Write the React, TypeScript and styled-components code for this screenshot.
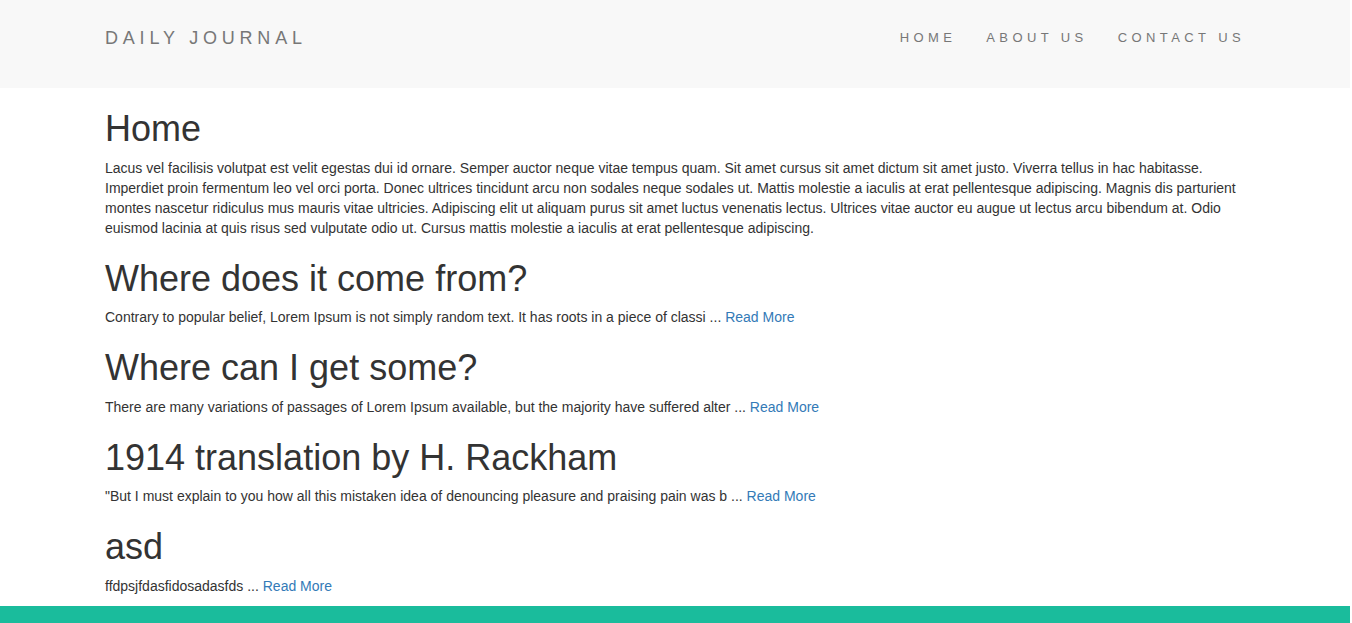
import React from "react";
import styled, { createGlobalStyle } from "styled-components";

const Global = createGlobalStyle`
  html, body { margin: 0; padding: 0; background: #fff; }
  body {
    font-family: "Liberation Sans", Arial, Helvetica, sans-serif;
    font-size: 14px;
    line-height: 1.42857;
    color: #333;
  }
  * { box-sizing: border-box; }
`;

const Page = styled.div`
  padding-right: 2px;
`;

const Navbar = styled.nav`
  background: #f8f8f8;
  height: 88px;
`;

const Container = styled.div`
  width: 1170px;
  margin: 0 auto;
  padding: 0 15px;
`;

const NavInner = styled(Container)`
  display: flex;
  align-items: center;
  justify-content: space-between;
  height: 100%;
  padding-bottom: 13px;
`;

const Brand = styled.a`
  font-size: 18px;
  letter-spacing: 4.8px;
  color: #777;
  text-decoration: none;
  line-height: 20px;
`;

const NavList = styled.ul`
  display: flex;
  list-style: none;
  margin: 0 -15px 0 0;
  padding: 0;
`;

const NavLink = styled.a`
  display: block;
  padding: 0 15px;
  font-size: 13px;
  letter-spacing: 4.4px;
  color: #777;
  text-decoration: none;
  line-height: 20px;
`;

const Main = styled(Container)`
  padding-top: 1px;
`;

const Heading = styled.h1`
  font-size: 36px;
  font-weight: 500;
  line-height: 1.1;
  margin: 20px 0 10px;
  color: #333;
`;

const Para = styled.p`
  margin: 0 0 10px;
`;

const ReadMore = styled.a`
  color: #337ab7;
  text-decoration: none;
`;

const Footer = styled.footer`
  background: #1abc9c;
  height: 60px;
  margin-top: -1px;
`;

const posts = [
  {
    title: "Where does it come from?",
    text: "Contrary to popular belief, Lorem Ipsum is not simply random text. It has roots in a piece of classi",
  },
  {
    title: "Where can I get some?",
    text: "There are many variations of passages of Lorem Ipsum available, but the majority have suffered alter",
  },
  {
    title: "1914 translation by H. Rackham",
    text: "\"But I must explain to you how all this mistaken idea of denouncing pleasure and praising pain was b",
  },
  { title: "asd", text: "ffdpsjfdasfidosadasfds" },
];

export default function App() {
  return (
    <Page>
      <Global />
      <Navbar>
        <NavInner>
          <Brand href="#">DAILY JOURNAL</Brand>
          <NavList>
            <li><NavLink href="#">HOME</NavLink></li>
            <li><NavLink href="#">ABOUT US</NavLink></li>
            <li><NavLink href="#">CONTACT US</NavLink></li>
          </NavList>
        </NavInner>
      </Navbar>
      <Main>
        <Heading>Home</Heading>
        <Para>
          Lacus vel facilisis volutpat est velit egestas dui id ornare. Semper auctor neque vitae tempus quam. Sit amet cursus sit amet dictum sit amet justo. Viverra tellus in hac habitasse. Imperdiet proin fermentum leo vel orci porta. Donec ultrices tincidunt arcu non sodales neque sodales ut. Mattis molestie a iaculis at erat pellentesque adipiscing. Magnis dis parturient montes nascetur ridiculus mus mauris vitae ultricies. Adipiscing elit ut aliquam purus sit amet luctus venenatis lectus. Ultrices vitae auctor eu augue ut lectus arcu bibendum at. Odio euismod lacinia at quis risus sed vulputate odio ut. Cursus mattis molestie a iaculis at erat pellentesque adipiscing.
        </Para>
        {posts.map((p) => (
          <React.Fragment key={p.title}>
            <Heading>{p.title}</Heading>
            <Para>
              {p.text} ... <ReadMore href="#">Read More</ReadMore>
            </Para>
          </React.Fragment>
        ))}
      </Main>
      <Footer />
    </Page>
  );
}
